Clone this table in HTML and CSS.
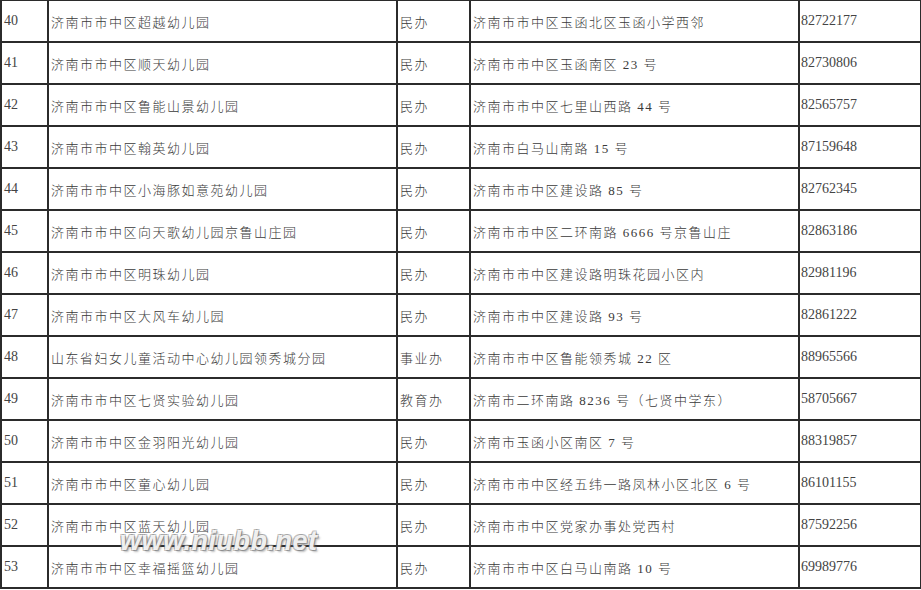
FILE: index.html
```html
<!DOCTYPE html>
<html lang="zh">
<head>
<meta charset="utf-8">
<link rel="stylesheet" href="styles.css">
</head>
<body>
<div class="page">
<table class="list">
<colgroup>
<col class="c-no"><col class="c-name"><col class="c-type"><col class="c-addr"><col class="c-tel">
</colgroup>
<tbody>
<tr><td class="num">40</td><td>济南市市中区超越幼儿园</td><td>民办</td><td>济南市市中区玉函北区玉函小学西邻</td><td class="num tel">82722177</td></tr>
<tr><td class="num">41</td><td>济南市市中区顺天幼儿园</td><td>民办</td><td>济南市市中区玉函南区 23 号</td><td class="num tel">82730806</td></tr>
<tr><td class="num">42</td><td>济南市市中区鲁能山景幼儿园</td><td>民办</td><td>济南市市中区七里山西路 44 号</td><td class="num tel">82565757</td></tr>
<tr><td class="num">43</td><td>济南市市中区翰英幼儿园</td><td>民办</td><td>济南市白马山南路 15 号</td><td class="num tel">87159648</td></tr>
<tr><td class="num">44</td><td>济南市市中区小海豚如意苑幼儿园</td><td>民办</td><td>济南市市中区建设路 85 号</td><td class="num tel">82762345</td></tr>
<tr><td class="num">45</td><td>济南市市中区向天歌幼儿园京鲁山庄园</td><td>民办</td><td>济南市市中区二环南路 6666 号京鲁山庄</td><td class="num tel">82863186</td></tr>
<tr><td class="num">46</td><td>济南市市中区明珠幼儿园</td><td>民办</td><td>济南市市中区建设路明珠花园小区内</td><td class="num tel">82981196</td></tr>
<tr><td class="num">47</td><td>济南市市中区大风车幼儿园</td><td>民办</td><td>济南市市中区建设路 93 号</td><td class="num tel">82861222</td></tr>
<tr><td class="num">48</td><td>山东省妇女儿童活动中心幼儿园领秀城分园</td><td>事业办</td><td>济南市市中区鲁能领秀城 22 区</td><td class="num tel">88965566</td></tr>
<tr><td class="num">49</td><td>济南市市中区七贤实验幼儿园</td><td>教育办</td><td>济南市二环南路 8236 号（七贤中学东）</td><td class="num tel">58705667</td></tr>
<tr><td class="num">50</td><td>济南市市中区金羽阳光幼儿园</td><td>民办</td><td>济南市玉函小区南区 7 号</td><td class="num tel">88319857</td></tr>
<tr><td class="num">51</td><td>济南市市中区童心幼儿园</td><td>民办</td><td>济南市市中区经五纬一路凤林小区北区 6 号</td><td class="num tel">86101155</td></tr>
<tr><td class="num">52</td><td>济南市市中区蓝天幼儿园</td><td>民办</td><td>济南市市中区党家办事处党西村</td><td class="num tel">87592256</td></tr>
<tr><td class="num">53</td><td>济南市市中区幸福摇篮幼儿园</td><td>民办</td><td>济南市市中区白马山南路 10 号</td><td class="num tel">69989776</td></tr>
</tbody>
</table>
<div class="watermark">www.niubb.net</div>
</div>
</body>
</html>
```

FILE: styles.css
```css
html, body {
  margin: 0;
  padding: 0;
  background: #ffffff;
}

.page {
  position: relative;
  width: 921px;
  height: 590px;
  overflow: hidden;
}

.list {
  border-collapse: collapse;
  table-layout: fixed;
  width: 920px;
  margin-left: 0;
  margin-top: -1px;
  font-family: "Liberation Serif", "Noto Sans CJK SC", serif;
  font-weight: 300;
  font-size: 13px;
  letter-spacing: 1.5px;
  color: #3a3a3a;
}

.c-no { width: 47px; }
.c-name { width: 349px; }
.c-type { width: 73px; }
.c-addr { width: 329px; }
.c-tel { width: 122px; }

.list td {
  height: 40px;
  padding: 0 0 0 2px;
  border: 2px solid #2b2b2b;
  vertical-align: middle;
  white-space: nowrap;
  overflow: hidden;
}

.list td.num {
  font-size: 14px;
  letter-spacing: 0;
  padding-left: 2px;
  color: #444;
}

.list td.tel {
  border-left-color: #777;
  padding-left: 1px;
}

.watermark {
  position: absolute;
  left: 120px;
  top: 526px;
  font-family: "Liberation Sans", sans-serif;
  font-weight: bold;
  font-style: italic;
  font-size: 27px;
  letter-spacing: 0.5px;
  color: rgba(255, 255, 255, 0.9);
  text-shadow:
    1px 1px 0 rgba(120, 120, 120, 0.55),
    -1px -1px 0 rgba(120, 120, 120, 0.45),
    1px -1px 0 rgba(120, 120, 120, 0.45),
    -1px 1px 0 rgba(120, 120, 120, 0.45),
    2px 2px 2px rgba(90, 90, 90, 0.4);
}
```
